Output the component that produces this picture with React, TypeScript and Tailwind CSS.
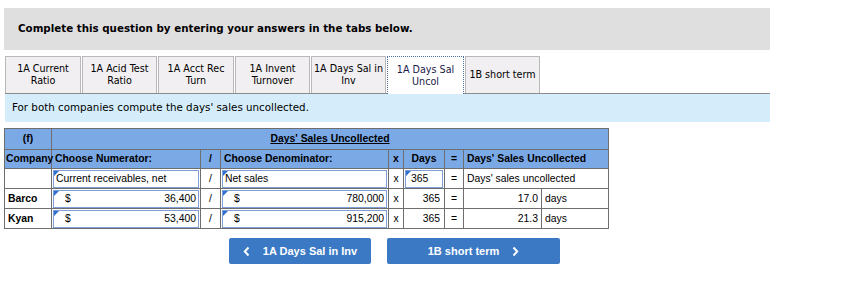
import React from "react";

// tabs across the top
const tabs = [
  { lines: ["1A Current", "Ratio"], w: 76 },
  { lines: ["1A Acid Test", "Ratio"], w: 75 },
  { lines: ["1A Acct Rec", "Turn"], w: 76 },
  { lines: ["1A Invent", "Turnover"], w: 75 },
  { lines: ["1A Days Sal in", "Inv"], w: 75 },
  { lines: ["1A Days Sal", "Uncol"], w: 77, active: true },
  { lines: ["1B short term"], w: 75 },
];

const rows = [
  { name: "Barco", num: "36,400", den: "780,000", result: "17.0" },
  { name: "Kyan", num: "53,400", den: "915,200", result: "21.3" },
];

const tahoma = { fontFamily: '"DejaVu Sans", Verdana, sans-serif' };
const arial = { fontFamily: '"Liberation Sans", Arial, sans-serif' };

function Flag() {
  return (
    <span className="absolute left-0 top-0 w-0 h-0 border-t-[5px] border-r-[5px] border-t-[#2f6fd0] border-r-transparent" />
  );
}

function Box({ children, right }: { children?: React.ReactNode; right?: boolean }) {
  return (
    <div
      className={`relative h-[18px] border border-[#7f9fd6] bg-white flex items-center px-[2px] ${
        right ? "justify-between" : ""
      }`}
    >
      <Flag />
      {children}
    </div>
  );
}

function Chevron({ left }: { left?: boolean }) {
  return (
    <svg width="7" height="11" viewBox="0 0 7 11" fill="none">
      <polyline
        points={left ? "5.5,1.5 1.8,5.5 5.5,9.5" : "1.5,1.5 5.2,5.5 1.5,9.5"}
        stroke="white"
        strokeWidth="2"
      />
    </svg>
  );
}

export default function App() {
  const cell = "border border-[#6e6e6e] p-0";
  const head = "border border-[#6e6e6e] bg-[#7aa9e6] font-bold text-black px-[3px] h-[19px]";

  return (
    <div className="w-[860px] h-[300px] bg-white pt-2 pl-1 text-black">
      {/* instruction banner */}
      <div
        className="w-[766px] h-[42px] bg-[#e0dfe0] flex items-center pl-[14px] text-[10.3px] font-bold"
        style={tahoma}
      >
        Complete this question by entering your answers in the tabs below.
      </div>

      {/* tabs */}
      <div className="mt-[6px] ml-px w-[765px] h-[38px] flex items-end gap-px border-b border-[#8c8c8c]" style={tahoma}>
        {tabs.map((t) => (
          <div
            key={t.lines[0]}
            style={{ width: t.w }}
            className={
              t.active
                ? "h-[38px] -mb-px bg-white border border-b-0 border-dotted border-[#4a6fa5] flex flex-col items-center justify-center text-[9.6px] leading-[12px] text-[#1a1a4a]"
                : "h-[37px] bg-[#f1eff1] border border-b-0 border-[#b8b8b8] flex flex-col items-center justify-center text-[9.6px] leading-[12px]"
            }
          >
            {t.lines.map((l) => (
              <span key={l}>{l}</span>
            ))}
          </div>
        ))}
      </div>

      {/* question strip */}
      <div className="ml-px w-[765px] h-[28px] bg-[#d5edfb] flex items-center pl-[7px] text-[10.3px]" style={tahoma}>
        For both companies compute the days' sales uncollected.
      </div>

      {/* table */}
      <table className="mt-[6px] border-collapse table-fixed w-[604px] text-[10.4px]" style={arial}>
        <colgroup>
          <col className="w-[47px]" />
          <col className="w-[149px]" />
          <col className="w-[20px]" />
          <col className="w-[168px]" />
          <col className="w-[15px]" />
          <col className="w-[41px]" />
          <col className="w-[19px]" />
          <col className="w-[78px]" />
          <col className="w-[67px]" />
        </colgroup>
        <tbody>
          <tr className="h-[21px]">
            <td className={`${head} text-center`}>(f)</td>
            <td colSpan={8} className={`${head} text-center underline`}>
              Days' Sales Uncollected
            </td>
          </tr>
          <tr className="h-[19px]">
            <td className={`${head} pl-[1px]`}>Company</td>
            <td className={head}>Choose Numerator:</td>
            <td className={`${head} text-center`}>/</td>
            <td className={head}>Choose Denominator:</td>
            <td className={`${head} text-center px-0`}>x</td>
            <td className={`${head} text-center`}>Days</td>
            <td className={`${head} text-center px-0`}>=</td>
            <td colSpan={2} className={head}>
              Days' Sales Uncollected
            </td>
          </tr>
          <tr className="h-[20px]">
            <td className={cell}></td>
            <td className={`${cell} px-px`}>
              <Box>Current receivables, net</Box>
            </td>
            <td className={`${cell} text-center`}>/</td>
            <td className={`${cell} px-px`}>
              <Box>Net sales</Box>
            </td>
            <td className={`${cell} text-center`}>x</td>
            <td className={`${cell} px-px`}>
              <Box>
                <span className="pl-[3px]">365</span>
              </Box>
            </td>
            <td className={`${cell} text-center`}>=</td>
            <td colSpan={2} className={`${cell} px-[3px]`}>
              Days' sales uncollected
            </td>
          </tr>
          {rows.map((r) => (
            <tr key={r.name} className="h-[20px]">
              <td className={`${cell} px-[3px] font-bold`}>{r.name}</td>
              <td className={`${cell} px-px`}>
                <Box right>
                  <span className="pl-[9px]">$</span>
                  <span>{r.num}</span>
                </Box>
              </td>
              <td className={`${cell} text-center`}>/</td>
              <td className={`${cell} px-px`}>
                <Box right>
                  <span className="pl-[9px]">$</span>
                  <span>{r.den}</span>
                </Box>
              </td>
              <td className={`${cell} text-center`}>x</td>
              <td className={`${cell} text-right pr-[4px]`}>365</td>
              <td className={`${cell} text-center`}>=</td>
              <td className={`${cell} text-right pr-[3px]`}>{r.result}</td>
              <td className={`${cell} px-[3px]`}>days</td>
            </tr>
          ))}
        </tbody>
      </table>

      {/* prev / next */}
      <div className="mt-[9px] ml-[225px] flex gap-[16px] text-[11px] font-bold text-white" style={arial}>
        <button className="w-[142px] h-[26px] rounded-[2px] bg-[#3b79c5] flex items-center justify-center gap-[13px]">
          <Chevron left />
          <span>1A Days Sal in Inv</span>
        </button>
        <button className="w-[173px] h-[26px] rounded-[2px] bg-[#3b79c5] flex items-center justify-center gap-[13px]">
          <span>1B short term</span>
          <Chevron />
        </button>
      </div>
    </div>
  );
}
